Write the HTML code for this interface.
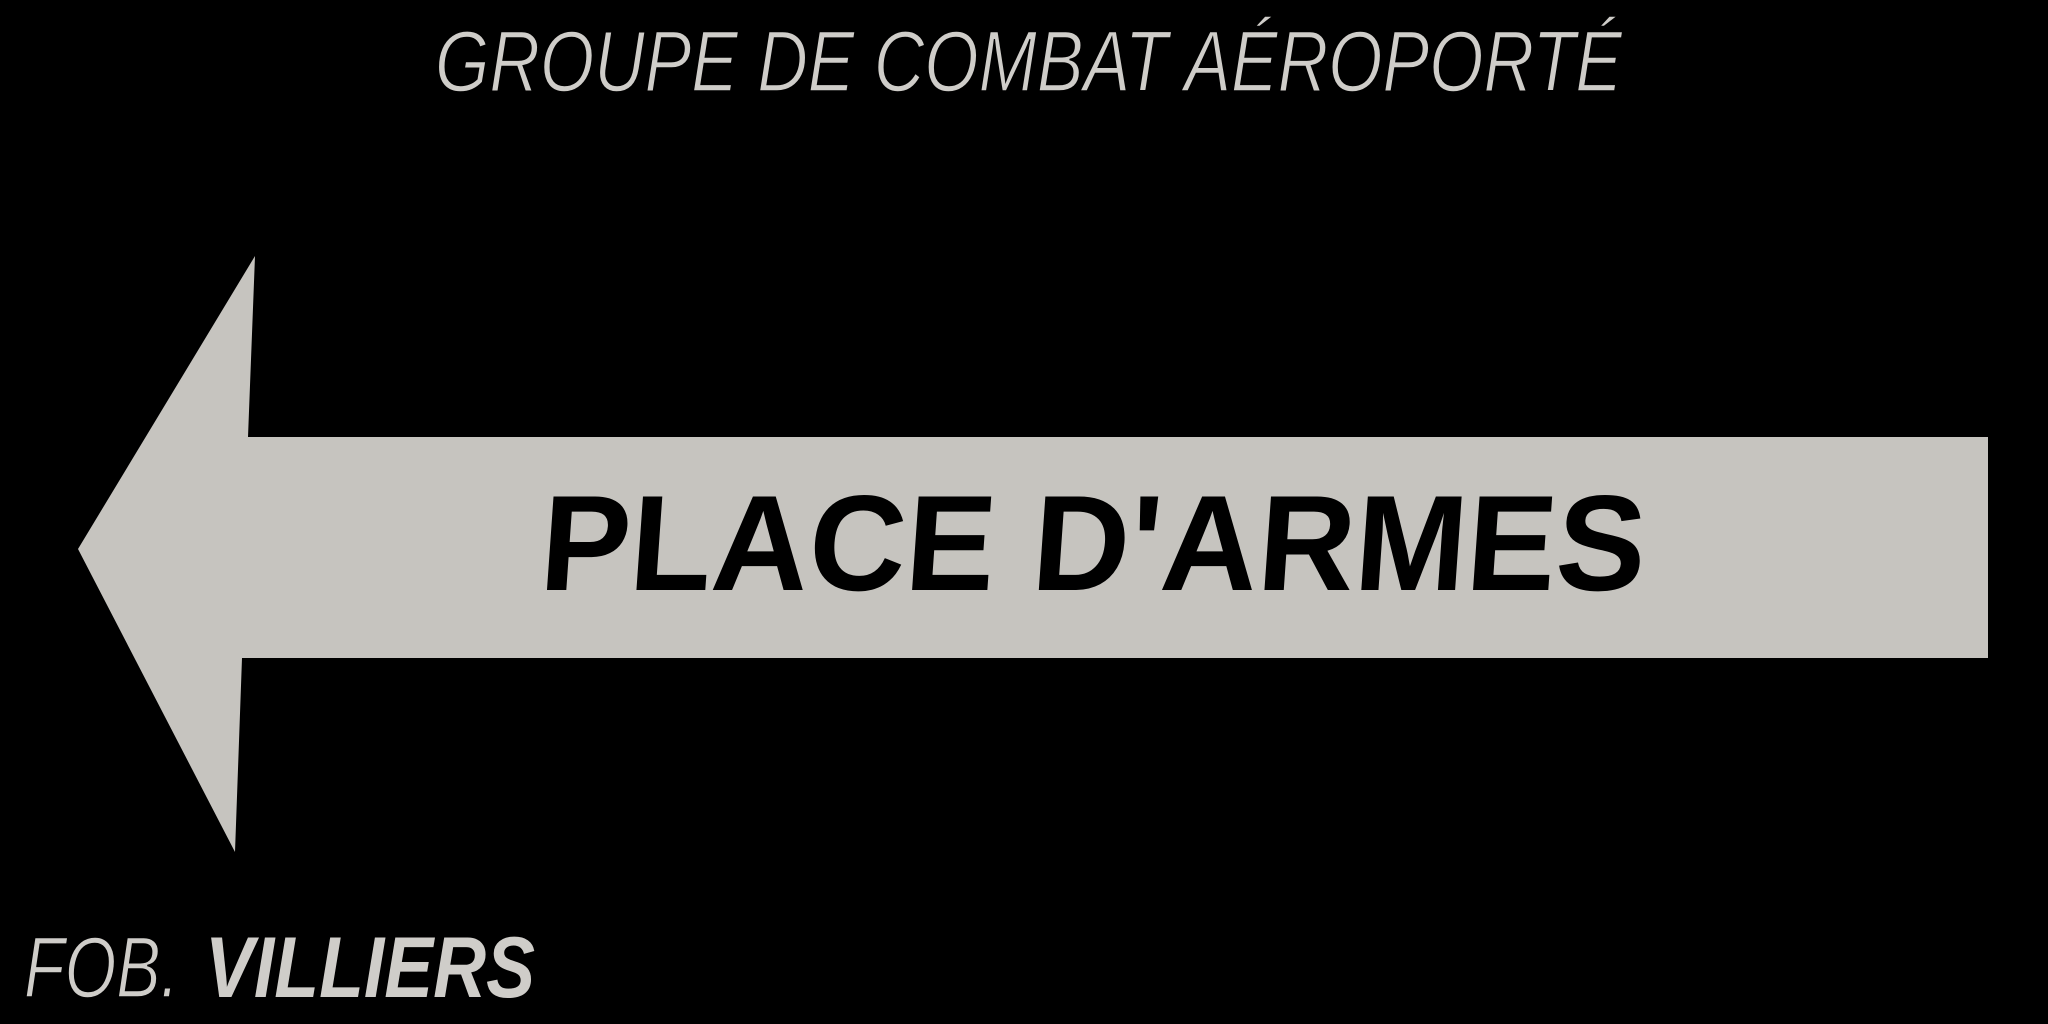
<!DOCTYPE html>
<html><head><meta charset="utf-8"><style>
html,body{margin:0;padding:0;background:#000;width:2048px;height:1024px;overflow:hidden}
svg{display:block}
</style></head><body>
<svg width="2048" height="1024" viewBox="0 0 2048 1024" xmlns="http://www.w3.org/2000/svg">
<rect width="2048" height="1024" fill="#000"/>
<polygon points="78,549 255,256 248,437 1988,437 1988,658 242,658 235,852" fill="#c6c4bf"/>
<text x="435" y="91" font-family="Liberation Sans, sans-serif" font-style="italic" font-size="86" fill="#cfcdc9" textLength="1187" lengthAdjust="spacingAndGlyphs" stroke="#000" stroke-width="1.5">GROUPE DE COMBAT AÉROPORTÉ</text>
<g transform="translate(538,590) skewX(-4)">
<text x="0" y="0" font-family="Liberation Sans, sans-serif" font-weight="bold" font-size="136" fill="#000" textLength="1105" lengthAdjust="spacingAndGlyphs">PLACE D'ARMES</text>
</g>
<text x="24" y="997" font-family="Liberation Sans, sans-serif" font-style="italic" font-size="86" fill="#cfcdc9" stroke="#000" stroke-width="1.5" textLength="155" lengthAdjust="spacingAndGlyphs">FOB.</text>
<text x="205" y="997" font-family="Liberation Sans, sans-serif" font-weight="bold" font-style="italic" font-size="86" fill="#cfcdc9" textLength="330" lengthAdjust="spacingAndGlyphs">VILLIERS</text>
</svg>
</body></html>
